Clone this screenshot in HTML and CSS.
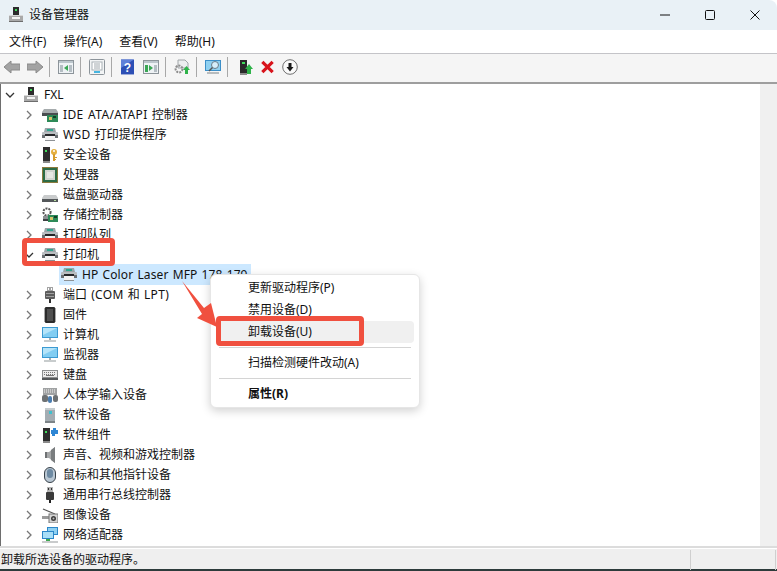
FILE: index.html
```html
<!DOCTYPE html>
<html lang="zh-CN">
<head>
<meta charset="utf-8">
<title>设备管理器</title>
<link rel="stylesheet" href="styles.css">
</head>
<body>
<svg class="defs" width="0" height="0" aria-hidden="true">
  <symbol id="i-pc" viewBox="0 0 16 16"><rect x="5" y="0" width="6" height="8" fill="#2c2c2c"/><rect x="7" y="2" width="2" height="2" fill="#3fdc5a"/><rect x="1" y="8" width="14" height="7" fill="#a9a9a9"/><rect x="1" y="8" width="14" height="1" fill="#d8d8d8"/><rect x="4" y="10" width="8" height="2" fill="#f4f4f4"/><rect x="1" y="14" width="14" height="1" fill="#6d6d6d"/></symbol>
  <symbol id="i-ide" viewBox="0 0 16 16"><path d="M0 5 2 2h12l2 3v4H0z" fill="#a6abad"/><rect x="0" y="6" width="16" height="3" fill="#4a4d50"/><rect x="5" y="8" width="11" height="7" fill="#2d8a57"/><rect x="7" y="10" width="3" height="3" fill="#d6c36b"/><rect x="11" y="9" width="3" height="2" fill="#143f28"/></symbol>
  <symbol id="i-prn" viewBox="0 0 16 16"><path d="M3 1h10l1 4H2z" fill="#9aa5a8"/><rect x="5" y="2" width="6" height="2" fill="#2fa58e"/><rect x="0" y="5" width="16" height="6" rx="1" fill="#b9bdc0"/><rect x="0" y="8" width="16" height="3" fill="#6b7073"/><rect x="3" y="7" width="10" height="2" fill="#242628"/><rect x="3" y="9" width="10" height="5" fill="#f2f2f2"/><rect x="3" y="13" width="10" height="1" fill="#8d9194"/></symbol>
  <symbol id="i-sec" viewBox="0 0 16 16"><rect x="1" y="0" width="7" height="15" fill="#2e2e2e"/><rect x="3" y="3" width="2" height="2" fill="#3fdc5a"/><rect x="1" y="14" width="7" height="2" fill="#8a8a8a"/><circle cx="12" cy="5" r="3" fill="#e5b040"/><circle cx="12" cy="4" r="1" fill="#fff"/><rect x="11" y="7" width="2" height="7" fill="#d79c2c"/><rect x="13" y="10" width="2" height="1" fill="#d79c2c"/><rect x="13" y="12" width="1" height="1" fill="#d79c2c"/></symbol>
  <symbol id="i-cpu" viewBox="0 0 16 16"><rect x="0" y="0" width="16" height="16" fill="#8a7a3d"/><rect x="1" y="1" width="14" height="14" fill="#2c6b45"/><rect x="3" y="3" width="10" height="10" fill="#d2d4d0"/><rect x="5" y="5" width="6" height="6" fill="#e6e7e4"/></symbol>
  <symbol id="i-disk" viewBox="0 0 16 16"><path d="M2 8h12l2 3v4H0v-4z" fill="#c9cbcc"/><rect x="0" y="12" width="16" height="3" fill="#54585a"/><rect x="12" y="13" width="2" height="1" fill="#b8e0a0"/></symbol>
  <symbol id="i-sto" viewBox="0 0 16 16"><circle cx="5" cy="5" r="3.6" fill="none" stroke="#555" stroke-width="2" stroke-dasharray="2 1"/><path d="M1 9h9v3H1z" fill="#8d9194"/><rect x="1" y="12" width="8" height="2" fill="#3e4143"/><rect x="6" y="8" width="10" height="7" fill="#2d8a57"/><rect x="8" y="10" width="3" height="3" fill="#d6c36b"/><rect x="12" y="9" width="3" height="2" fill="#143f28"/></symbol>
  <symbol id="i-port" viewBox="0 0 16 16"><rect x="5" y="0" width="6" height="4" fill="#a3a3a3"/><rect x="6" y="1" width="1" height="2" fill="#fff"/><rect x="9" y="1" width="1" height="2" fill="#fff"/><rect x="3" y="4" width="10" height="8" rx="1" fill="#5d5d5d"/><rect x="4" y="6" width="8" height="1" fill="#a0a0a0"/><rect x="4" y="9" width="8" height="1" fill="#a0a0a0"/><rect x="7" y="12" width="2" height="4" fill="#2d2d2d"/></symbol>
  <symbol id="i-fw" viewBox="0 0 16 16"><rect x="3" y="0" width="10" height="16" rx="1" fill="#2c2c2c"/><rect x="5" y="2" width="6" height="12" fill="#505050"/><path d="M2 2h1M2 4h1M2 6h1M2 8h1M2 10h1M2 12h1M2 14h1M13 2h1M13 4h1M13 6h1M13 8h1M13 10h1M13 12h1M13 14h1" stroke="#555" stroke-width="1"/></symbol>
  <symbol id="i-comp" viewBox="0 0 16 16"><rect x="0" y="0" width="16" height="11" fill="#3c9ad2"/><rect x="1" y="1" width="14" height="9" fill="#82cdf2"/><path d="M1 1h14L1 8z" fill="#b5e4f9"/><rect x="7" y="11" width="2" height="2" fill="#a8acae"/><rect x="2" y="13" width="12" height="2" fill="#c8cccd"/></symbol>
  <symbol id="i-kbd" viewBox="0 0 16 16"><rect x="0" y="3" width="16" height="10" fill="#8d8f90"/><rect x="1" y="4" width="14" height="6" fill="#ececec"/><path d="M2 5.500h12M2 7.500h12" stroke="#777" stroke-dasharray="1 1"/><rect x="4" y="8" width="8" height="1" fill="#777"/><rect x="0" y="11" width="16" height="2" fill="#55585a"/></symbol>
  <symbol id="i-hid" viewBox="0 0 16 16"><rect x="1" y="1" width="14" height="7" fill="#a0a2a3"/><path d="M2 3h12M2 5h12" stroke="#f2f2f2" stroke-dasharray="1 1"/><rect x="0" y="8" width="6" height="7" rx="2" fill="#6d7173"/><rect x="6" y="9" width="4" height="7" rx="2" fill="#4a7db0"/><rect x="11" y="8" width="5" height="7" rx="2" fill="#6d7173"/></symbol>
  <symbol id="i-soft" viewBox="0 0 16 16"><path d="M3 1h10v15H3z" fill="#a4adb3"/><rect x="3" y="1" width="10" height="2" fill="#c5cccf"/><rect x="7" y="4" width="3" height="3" fill="#3fc0cf"/><rect x="3" y="14" width="10" height="2" fill="#7c8488"/></symbol>
  <symbol id="i-comp2" viewBox="0 0 16 16"><rect x="1" y="1" width="7" height="13" fill="#2e2e2e"/><rect x="3" y="4" width="2" height="2" fill="#3fdc5a"/><rect x="1" y="14" width="7" height="2" fill="#8a8a8a"/><path d="M9 3h2V1h3v2h2v4h-3v2h-3V7H9z" fill="#2e86d4"/></symbol>
  <symbol id="i-snd" viewBox="0 0 16 16"><path d="M3 5h4l6-5v16l-6-5H3z" fill="#a6a8a9"/><path d="M9 3l4-3v16l-4-3z" fill="#7a7d7f"/><rect x="3" y="5" width="2" height="6" fill="#6f7274"/></symbol>
  <symbol id="i-mouse" viewBox="0 0 16 16"><rect x="2.500" y="0.500" width="11" height="15" rx="5.500" fill="#b9c7d3" stroke="#39424a"/><rect x="5" y="2" width="6" height="9" rx="3" fill="#6d8aa3"/></symbol>
  <symbol id="i-usb" viewBox="0 0 16 16"><rect x="5" y="0" width="6" height="5" fill="#b4b4b4"/><rect x="6" y="1" width="1" height="2" fill="#333"/><rect x="9" y="1" width="1" height="2" fill="#333"/><rect x="4" y="5" width="8" height="8" rx="1" fill="#3a3a3a"/><rect x="7" y="13" width="2" height="3" fill="#222"/></symbol>
  <symbol id="i-cam" viewBox="0 0 16 16"><path d="M1 2l12 5" stroke="#555" stroke-width="1.200"/><rect x="0" y="9" width="7" height="3" fill="#9b9b9b"/><rect x="7" y="7" width="9" height="9" fill="#d5d5d5" stroke="#777"/><circle cx="11.500" cy="11.500" r="2.500" fill="#3c3c3c"/><circle cx="11.500" cy="11.500" r="1" fill="#bcbcbc"/></symbol>
  <symbol id="i-net" viewBox="0 0 16 16"><rect x="5" y="0" width="11" height="8" fill="#2c87c9"/><rect x="6" y="1" width="9" height="6" fill="#8ed0f2"/><rect x="0" y="4" width="12" height="8" fill="#2c87c9"/><rect x="1" y="5" width="10" height="6" fill="#a8def7"/><rect x="0" y="14" width="16" height="2" fill="#c9cbcc"/><path d="M4 12h4v2H4z" fill="#3da84f"/></symbol>
  <symbol id="c-r" viewBox="0 0 10 10"><path d="M3 1l4 4-4 4" fill="none" stroke="#767676" stroke-width="1.300"/></symbol>
  <symbol id="c-d" viewBox="0 0 10 10"><path d="M1 3l4 4 4-4" fill="none" stroke="#333" stroke-width="1.300"/></symbol>
</svg>

<div class="win">
  <header class="titlebar">
    <svg class="ico title-ico"><use href="#i-pc"/></svg>
    <span class="title">设备管理器</span>
    <div class="winbtns">
      <span class="winbtn"><svg width="12" height="12" viewBox="0 0 12 12"><path d="M1 6h10" stroke="#111" stroke-width="1"/></svg></span>
      <span class="winbtn"><svg width="12" height="12" viewBox="0 0 12 12"><rect x="1.500" y="1.500" width="9" height="9" rx="1" fill="none" stroke="#111"/></svg></span>
      <span class="winbtn"><svg width="12" height="12" viewBox="0 0 12 12"><path d="M1.500 1.500l9 9M10.500 1.500l-9 9" stroke="#111"/></svg></span>
    </div>
  </header>

  <nav class="menubar">
    <span>文件(F)</span><span>操作(A)</span><span>查看(V)</span><span>帮助(H)</span>
  </nav>

  <div class="toolbar">
    <svg class="tb" viewBox="0 0 16 16"><path d="M0 8l7-6v3h9v6H7v3z" fill="#a3a3a3" stroke="#8a8a8a"/></svg>
    <svg class="tb tb-gap" viewBox="0 0 16 16"><path d="M16 8L9 2v3H0v6h9v3z" fill="#a3a3a3" stroke="#8a8a8a"/></svg>
    <i class="sep"></i>
    <svg class="tb" viewBox="0 0 16 16"><rect x=".5" y="1.500" width="15" height="13" fill="#eef2f5" stroke="#8c949a"/><rect x="1" y="2" width="14" height="2" fill="#bcc6cc"/><rect x="2" y="6" width="3" height="7" fill="#b5bec4"/><rect x="11" y="6" width="3" height="7" fill="#b5bec4"/><path d="M10 6v6L6 9z" fill="#3aa655"/></svg>
    <i class="sep"></i>
    <svg class="tb" viewBox="0 0 16 16"><rect x=".5" y=".5" width="15" height="15" rx="1" fill="#f2f4f5" stroke="#8c949a"/><rect x="3" y="3" width="10" height="8" fill="#fff" stroke="#a8b0b5"/><path d="M5 5h6M5 7h6M5 9h6" stroke="#a0a8ad"/><rect x="5" y="12" width="6" height="2" fill="#45b5e0"/></svg>
    <i class="sep"></i>
    <svg class="tb tb-help" viewBox="0 0 14 16"><rect width="14" height="16" fill="#2d4fb5"/><path d="M0 0h14L0 9z" fill="#5d7fd8"/><text x="7" y="13" class="tb-q">?</text></svg>
    <svg class="tb tb-gap" viewBox="0 0 16 16"><rect x=".5" y="1.500" width="15" height="13" fill="#eef2f5" stroke="#8c949a"/><rect x="1" y="2" width="14" height="2" fill="#bcc6cc"/><rect x="2" y="6" width="3" height="7" fill="#3aa655"/><path d="M6 6v6l4-3z" fill="#3aa655"/><rect x="11" y="6" width="3" height="7" fill="#b5bec4"/></svg>
    <i class="sep"></i>
    <svg class="tb" viewBox="0 0 16 16"><path d="M4 1h7l3 3v5H4z" fill="#eceeef" stroke="#a0a5a8"/><circle cx="5" cy="10" r="3.400" fill="none" stroke="#8d8d8d" stroke-width="2" stroke-dasharray="2 1"/><path d="M9 11l3.500-4 3.500 4h-2v4h-3v-4z" fill="#2fb34a"/></svg>
    <i class="sep"></i>
    <svg class="tb" viewBox="0 0 16 16"><rect x=".5" y="1.500" width="15" height="10" fill="#8fd0f0" stroke="#3c8fc8"/><circle cx="10" cy="6" r="3.500" fill="#d6eefa" stroke="#6a7d8a"/><path d="M7.500 8.500 4 12" stroke="#555" stroke-width="1.500"/><rect x="2" y="13" width="12" height="2" fill="#b8bcbe"/></svg>
    <i class="sep"></i>
    <svg class="tb tb-l" viewBox="0 0 15 16"><rect x="1" y="1" width="7" height="13" fill="#2a2a2a"/><rect x="3" y="3" width="3" height="2" fill="#3fdc5a"/><rect x="1" y="14" width="7" height="2" fill="#8a8a8a"/><path d="M6 10l4-5 4 5h-2v5H8v-5z" fill="#2fb34a"/></svg>
    <svg class="tb tb-x" viewBox="0 0 16 16"><path d="M2.500 2.500l11 11M13.500 2.500l-11 11" stroke="#d8141c" stroke-width="3.400"/></svg>
    <svg class="tb tb-o" viewBox="0 0 16 16"><circle cx="8" cy="8" r="7.300" fill="#fafafa" stroke="#6f6f6f"/><path d="M4.500 8H6.500V4h3v4h2L8 12.500z" fill="#1a1a1a"/></svg>
  </div>

  <main class="content">
    <div class="tree">
      <div class="row lvl0"><svg class="chev"><use href="#c-d"/></svg><svg class="ico"><use href="#i-pc"/></svg><span>FXL</span></div>
      <div class="row"><svg class="chev"><use href="#c-r"/></svg><svg class="ico"><use href="#i-ide"/></svg><span><em class="lat">IDE ATA/ATAPI</em> 控制器</span></div>
      <div class="row"><svg class="chev"><use href="#c-r"/></svg><svg class="ico"><use href="#i-prn"/></svg><span><em class="lat">WSD</em> 打印提供程序</span></div>
      <div class="row"><svg class="chev"><use href="#c-r"/></svg><svg class="ico"><use href="#i-sec"/></svg><span>安全设备</span></div>
      <div class="row"><svg class="chev"><use href="#c-r"/></svg><svg class="ico"><use href="#i-cpu"/></svg><span>处理器</span></div>
      <div class="row"><svg class="chev"><use href="#c-r"/></svg><svg class="ico"><use href="#i-disk"/></svg><span>磁盘驱动器</span></div>
      <div class="row"><svg class="chev"><use href="#c-r"/></svg><svg class="ico"><use href="#i-sto"/></svg><span>存储控制器</span></div>
      <div class="row"><svg class="chev"><use href="#c-r"/></svg><svg class="ico"><use href="#i-prn"/></svg><span>打印队列</span></div>
      <div class="row"><svg class="chev"><use href="#c-d"/></svg><svg class="ico"><use href="#i-prn"/></svg><span>打印机</span></div>
      <div class="row lvl2"><svg class="ico"><use href="#i-prn"/></svg><span class="model">HP Color Laser MFP 178 179</span></div>
      <div class="row"><svg class="chev"><use href="#c-r"/></svg><svg class="ico"><use href="#i-port"/></svg><span>端口 <em class="lat">(COM</em> 和 <em class="lat">LPT)</em></span></div>
      <div class="row"><svg class="chev"><use href="#c-r"/></svg><svg class="ico"><use href="#i-fw"/></svg><span>固件</span></div>
      <div class="row"><svg class="chev"><use href="#c-r"/></svg><svg class="ico"><use href="#i-comp"/></svg><span>计算机</span></div>
      <div class="row"><svg class="chev"><use href="#c-r"/></svg><svg class="ico"><use href="#i-comp"/></svg><span>监视器</span></div>
      <div class="row"><svg class="chev"><use href="#c-r"/></svg><svg class="ico"><use href="#i-kbd"/></svg><span>键盘</span></div>
      <div class="row"><svg class="chev"><use href="#c-r"/></svg><svg class="ico"><use href="#i-hid"/></svg><span>人体学输入设备</span></div>
      <div class="row"><svg class="chev"><use href="#c-r"/></svg><svg class="ico"><use href="#i-soft"/></svg><span>软件设备</span></div>
      <div class="row"><svg class="chev"><use href="#c-r"/></svg><svg class="ico"><use href="#i-comp2"/></svg><span>软件组件</span></div>
      <div class="row"><svg class="chev"><use href="#c-r"/></svg><svg class="ico"><use href="#i-snd"/></svg><span>声音、视频和游戏控制器</span></div>
      <div class="row"><svg class="chev"><use href="#c-r"/></svg><svg class="ico"><use href="#i-mouse"/></svg><span>鼠标和其他指针设备</span></div>
      <div class="row"><svg class="chev"><use href="#c-r"/></svg><svg class="ico"><use href="#i-usb"/></svg><span>通用串行总线控制器</span></div>
      <div class="row"><svg class="chev"><use href="#c-r"/></svg><svg class="ico"><use href="#i-cam"/></svg><span>图像设备</span></div>
      <div class="row"><svg class="chev"><use href="#c-r"/></svg><svg class="ico"><use href="#i-net"/></svg><span>网络适配器</span></div>
    </div>
    <div class="scrollbar"></div>
  </main>

  <footer class="status">
    <span class="status-text">卸载所选设备的驱动程序。</span>
    <i class="status-div"></i>
    <i class="status-end"></i>
  </footer>
</div>

<div class="ctx">
  <div class="ctx-item">更新驱动程序(P)</div>
  <div class="ctx-item">禁用设备(D)</div>
  <div class="ctx-item hover">卸载设备(U)</div>
  <hr class="ctx-sep">
  <div class="ctx-item">扫描检测硬件改动(A)</div>
  <hr class="ctx-sep">
  <div class="ctx-item bold">属性(R)</div>
</div>

<div class="mark mark-printer"></div>
<div class="mark mark-uninstall"></div>
<svg class="arrow" width="40" height="50" viewBox="0 0 40 50"><path d="M1 0 23 27 30 22 36 46 16 37 21 33z" fill="#f0503f"/></svg>
</body>
</html>
```

FILE: styles.css
```css
* { box-sizing: border-box; }
html, body { margin: 0; height: 100%; background: #fff; overflow: hidden; }
body {
  font: 12px/20px "Noto Sans", "Noto Sans CJK SC", sans-serif;
  color: #111;
}
.defs { position: absolute; }
.win { display: flex; flex-direction: column; height: 571px; }

.ico { width: 16px; height: 16px; flex: none; }

.titlebar {
  display: flex; align-items: center; height: 30px; flex: none;
  background: #e9f1f6; padding-left: 8px; border-top-right-radius: 8px;
}
.title { margin-left: 5px; }
.winbtns { display: flex; margin-left: auto; }
.winbtn { width: 45px; height: 30px; display: flex; align-items: center; justify-content: center; }

.menubar {
  display: flex; gap: 17px; height: 24px; flex: none; align-items: center;
  padding-left: 9px; background: #fff; border-bottom: 1px solid #c4c4c8;
}

.toolbar {
  display: flex; align-items: center; height: 30px; flex: none;
  padding: 0 0 2px 4px; background: #f5f5f5; border-bottom: 2px solid #9e9e9e;
}
.tb { width: 16px; height: 16px; flex: none; }
.tb-gap { margin-left: 7px; }
.tb-help { width: 13px; margin-left: 1px; }
.tb-help + .tb-gap { margin-left: 9px; }
.tb-l { width: 15px; margin-left: 3px; }
.tb-x { margin-left: 6px; width: 15px; }
.tb-o { margin-left: 7px; }
.tb-q { font: bold 13px "Liberation Sans", sans-serif; fill: #fff; text-anchor: middle; }
.sep { width: 1px; height: 20px; background: #a8a8a8; margin: 0 8px 0 6px; flex: none; }

.content { flex: 1; display: flex; min-height: 0; border-left: 1px solid #6e6e6e; }
.tree { flex: 1; background: #fff; padding-top: 1px; }
.scrollbar { width: 17px; background: #f0f0f0; }

.row { display: flex; align-items: center; height: 20px; padding-left: 22px; white-space: nowrap; word-spacing: 1px; }
.row span { margin-left: 5px; }
.row.lvl0 { padding-left: 3px; }
.lat { font-style: normal; letter-spacing: .35px; }
.model { letter-spacing: .1px; }
.chev { width: 10px; height: 10px; margin-right: 8px; margin-left: 1px; flex: none; }
.row.lvl2 { margin: -1px 0 0 58px; height: 21px; width: 192px; padding-left: 2px; background: #cce8ff; }

.status {
  display: flex; align-items: center; height: 25px; flex: none;
  padding-top: 2px; background: #efefef;
  border-top: 2px solid #dcdcdc; box-shadow: inset 0 1px 0 #fff;
  border-bottom: 2px solid #2d3b3b;
}
.status-text { padding-left: 1px; }
.status-div { width: 1px; height: 20px; background: #cfcfcf; margin-left: auto; }
.status-end { width: 1px; height: 20px; background: #cfcfcf; margin: 0 1px 0 84px; }

.ctx {
  position: absolute; left: 210px; top: 274px; width: 210px; height: 134px;
  background: #fff; border-radius: 6px; padding-top: 2px;
  border: 1px solid #e6e6e6;
  box-shadow: 0 3px 10px rgba(0, 0, 0, .18);
}
.ctx-item { height: 22px; line-height: 22px; margin: 0 5px 0 6px; padding-left: 31px; border-radius: 4px; }
.ctx-item.hover { background: #f0f0f0; }
.ctx-item.bold { font-weight: 700; }
.ctx-sep { border: 0; border-top: 1px solid #d4d4d4; margin: 4px 8px; }

.mark { position: absolute; border: 5px solid #f0503f; border-radius: 4px; }
.mark-printer { left: 22px; top: 238px; width: 93px; height: 28px; }
.mark-uninstall { left: 216px; top: 316px; width: 148px; height: 30px; }
.arrow { position: absolute; left: 181px; top: 281px; }
```
